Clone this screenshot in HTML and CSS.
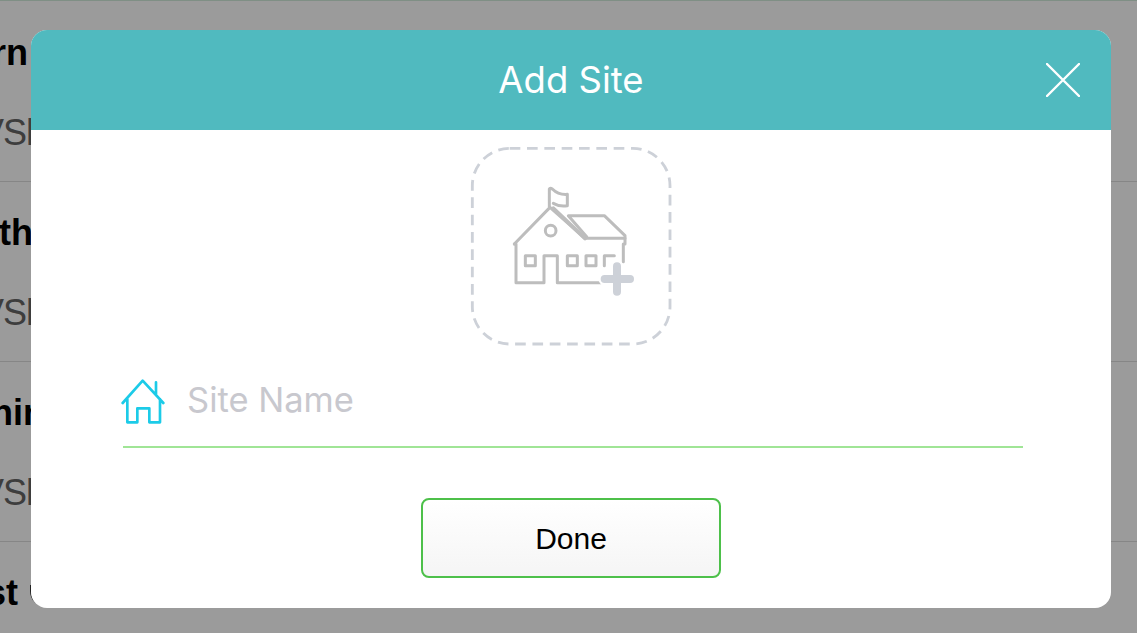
FILE: index.html
```html
<!DOCTYPE html>
<html lang="en">
<head>
    <meta charset="UTF-8">
    <meta name="viewport" content="width=device-width, initial-scale=1.0">
    <title>Add Site</title>
    <link rel="stylesheet" href="styles.css">
</head>
<body>

    <!-- Site list behind the dialog -->
    <div class="site-list">
        <div class="site-row">
            <div class="site-title title-a">rn</div>
            <div class="site-sub">VSh</div>
        </div>
        <div class="site-row">
            <div class="site-title title-b">th</div>
            <div class="site-sub">VSh</div>
        </div>
        <div class="site-row">
            <div class="site-title title-c">hin</div>
            <div class="site-sub">VSh</div>
        </div>
        <div class="site-row">
            <div class="site-title title-d">st</div>
        </div>
    </div>

    <!-- Add site dialog -->
    <div class="dialog-edge"></div>
    <div class="dialog">
        <div class="dialog-header">
            <span></span>
            <h1>Add Site</h1>
            <svg class="close-icon" viewBox="0 0 34 34" width="34" height="34">
                <path d="M1 1L33 33M33 1L1 33" />
            </svg>
        </div>

        <div class="dialog-body">
            <svg class="photo-picker" viewBox="0 0 615 615" width="205" height="205">
                <rect class="picker-outline" x="7" y="10" width="593" height="587" rx="112" />
                <g class="school">
                    <path d="M133 297L240 187L345 280H465" />
                    <path d="M250 190L345 280" class="school-thick" />
                    <path d="M133 297H138V413H222V332H262V413H392" />
                    <path d="M460 297V350" />
                    <path d="M465 297V272L403 212H295L350 275" />
                    <path d="M238 185V132Q240 127 247 132Q265 150 292 148V182Q270 186 250 175" />
                    <circle cx="242" cy="257" r="16" />
                    <rect x="166" y="332" width="30" height="30" />
                    <rect x="292" y="332" width="30" height="30" />
                    <rect x="348" y="332" width="30" height="30" />
                    <path d="M403 362V332H433" />
                </g>
                <path class="plus-halo" d="M404 402H480M441 364V440" />
                <path class="plus" d="M404 402H480M441 364V440" />
            </svg>

            <div class="name-field">
                <svg class="home-icon" viewBox="60 40 135 135" width="45" height="45">
                    <path d="M68 112L128 45L190 112M168 50V85M82 100V170H112V128H148V170H180V100" />
                </svg>
                <input class="name-input" type="text" placeholder="Site Name">
            </div>

            <button class="done-button">Done</button>
        </div>
    </div>

</body>
</html>
```

FILE: styles.css
```css
body {
    margin: 0;
    height: 633px;
    overflow: hidden;
    background-color: #9b9b9b;
    font-family: "Liberation Sans", Arial, sans-serif;
    position: relative;
}

/* Background list */
.site-list {
    height: 633px;
    overflow: hidden;
    box-sizing: border-box;
    border-top: 1px solid #7f8f85;
    padding-top: 1px;
}

.site-row {
    height: 149px;
    border-bottom: 1px solid #868686;
    padding-top: 30px;
}

.site-title {
    font-size: 36px;
    font-weight: bold;
    line-height: 42px;
    color: #000;
}

.title-a {
    margin-left: -8px;
}

.title-b {
    margin-left: -1px;
}

.title-c {
    margin-left: -9px;
}

.title-d {
    margin-left: -14px;
}

.site-sub {
    margin-top: 38px;
    margin-left: -20px;
    font-size: 36px;
    letter-spacing: -1px;
    line-height: 42px;
    color: #3d3d3d;
}

/* Dialog */
.dialog-edge {
    position: absolute;
    top: 585px;
    left: 30px;
    width: 30px;
    height: 22px;
    border-left: 1px solid #222;
    border-bottom-left-radius: 16px;
}

.dialog {
    position: absolute;
    top: 30px;
    left: 31px;
    width: 1080px;
    height: 578px;
    background-color: #fff;
    border-radius: 16px;
    overflow: hidden;
}

.dialog-header {
    height: 100px;
    background-color: #50babf;
    display: grid;
    grid-template-columns: 1fr auto 1fr;
    align-items: center;
}

.dialog-header h1 {
    margin: 0;
    font-family: Inter, sans-serif;
    font-size: 36.5px;
    font-weight: 400;
    color: #fff;
}

.close-icon {
    justify-self: end;
    margin-right: 31px;
}

.close-icon path {
    fill: none;
    stroke: #fff;
    stroke-width: 2.4;
    stroke-linecap: round;
}

.dialog-body {
    display: flex;
    flex-direction: column;
    align-items: center;
}

.photo-picker {
    margin-top: 15px;
    margin-left: 3px;
}

.picker-outline {
    fill: none;
    stroke: #cdd1d8;
    stroke-width: 8.5;
    stroke-dasharray: 32 20;
}

.school path,
.school rect,
.school circle {
    fill: none;
    stroke: #bdbdbd;
    stroke-width: 9;
    stroke-linejoin: round;
    stroke-linecap: round;
}

.school .school-thick {
    stroke-width: 12;
}

.plus-halo {
    fill: none;
    stroke: #fff;
    stroke-width: 38;
    stroke-linecap: round;
}

.plus {
    fill: none;
    stroke: #cdd1d8;
    stroke-width: 24;
    stroke-linecap: round;
}

.name-field {
    width: 900px;
    height: 77px;
    margin-top: 19px;
    margin-left: 4px;
    border-bottom: 2px solid #a0e596;
    display: flex;
    align-items: flex-start;
    gap: 22px;
}

.home-icon {
    margin-left: -3px;
    margin-top: 10px;
    flex: none;
}

.home-icon path {
    fill: none;
    stroke: #1ccbe8;
    stroke-width: 8;
    stroke-linecap: round;
    stroke-linejoin: round;
}

.name-input {
    flex: 1;
    border: none;
    outline: none;
    padding: 0;
    margin-top: 9px;
    height: 42px;
    font-family: Inter, sans-serif;
    font-size: 34.5px;
    color: #333;
    background: transparent;
}

.name-input::placeholder {
    color: #c8c8ce;
    opacity: 1;
}

.done-button {
    width: 300px;
    height: 80px;
    margin-top: 50px;
    padding-top: 3px;
    border: 2.5px solid #4dc04a;
    border-radius: 8px;
    background: linear-gradient(#fff, #f5f5f5);
    font-family: "Liberation Sans", Arial, sans-serif;
    font-size: 30px;
    color: #000;
}
```
